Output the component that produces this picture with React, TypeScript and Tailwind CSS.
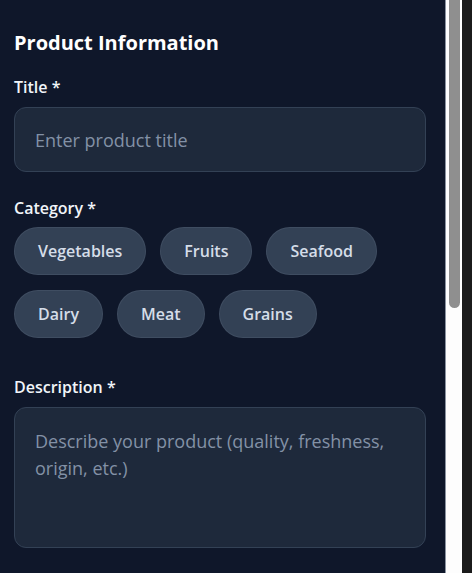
import React from 'react';

const categories = [
  ['Vegetables', 'Fruits', 'Seafood'],
  ['Dairy', 'Meat', 'Grains'],
];

export default function App() {
  return (
    <div className="flex h-[573px] w-[472px] overflow-hidden bg-[#1b1b1b]" style={{ fontFamily: '"Open Sans", "Noto Sans", sans-serif' }}>
      {/* form panel */}
      <div className="h-full w-[445px] shrink-0 overflow-hidden bg-[#0f172a]">
        <div className="pl-[14px] pr-[19px] pt-[29px]">
          <h2 className="text-[20px] leading-7 font-bold text-white">Product Information</h2>

          {/* Title */}
          <div className="mt-[18px]">
            <label className="block text-base leading-6 font-semibold text-[#f1f5f9] mb-2">Title *</label>
            <input
              type="text"
              placeholder="Enter product title"
              className="w-full h-[65px] rounded-xl border border-[#334155] bg-[#1e293b] px-5 text-lg text-white placeholder:text-[#8391a6] outline-none"
            />
          </div>

          {/* Category */}
          <div className="mt-6">
            <label className="block text-base leading-6 font-semibold text-[#f1f5f9] mb-[7px]">Category *</label>
            <div className="flex flex-col gap-[15px]">
              {categories.map((row, i) => (
                <div key={i} className="flex gap-[14px]">
                  {row.map((c) => (
                    <button
                      key={c}
                      type="button"
                      className="rounded-full border border-[#475569]/60 bg-[#334155] px-[23px] py-[11px] text-base leading-6 font-semibold text-[#d5dde8]"
                    >
                      {c}
                    </button>
                  ))}
                </div>
              ))}
            </div>
          </div>

          {/* Description */}
          <div className="mt-[37px]">
            <label className="block text-base leading-6 font-semibold text-[#f1f5f9] mb-2">Description *</label>
            <textarea
              rows={4}
              placeholder="Describe your product (quality, freshness, origin, etc.)"
              className="block w-full h-[141px] resize-none rounded-xl border border-[#334155] bg-[#1e293b] px-5 py-5 text-lg leading-[27px] text-white placeholder:text-[#8391a6] outline-none"
            />
          </div>
        </div>
      </div>

      {/* scrollbar */}
      <div className="h-full w-[17px] shrink-0 border-l border-[#8b93a0] bg-[#fdfdfd] pl-[3px] pr-[2px]">
        <div className="h-[308px] rounded-b-full bg-[#8f8f8f]" />
      </div>
    </div>
  );
}
